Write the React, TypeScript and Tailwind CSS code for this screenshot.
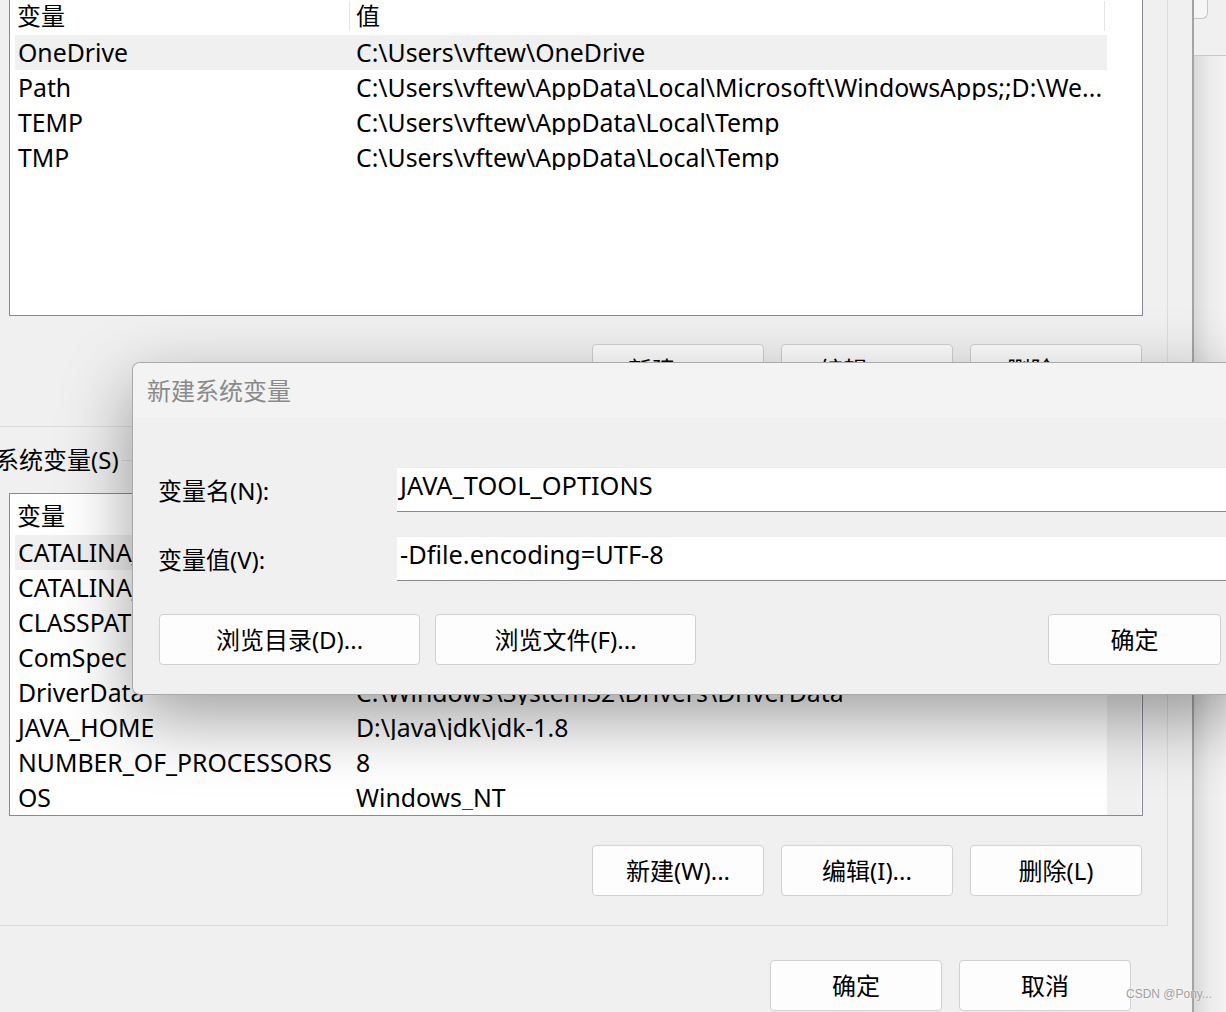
import React from 'react';

type Row = { name: string; value: string };

const userRows: Row[] = [
  { name: 'OneDrive', value: 'C:\\Users\\vftew\\OneDrive' },
  { name: 'Path', value: 'C:\\Users\\vftew\\AppData\\Local\\Microsoft\\WindowsApps;;D:\\We...' },
  { name: 'TEMP', value: 'C:\\Users\\vftew\\AppData\\Local\\Temp' },
  { name: 'TMP', value: 'C:\\Users\\vftew\\AppData\\Local\\Temp' },
];

const systemRows: Row[] = [
  { name: 'CATALINA_BASE', value: 'D:\\Tomcat\\apache-tomcat-9.0' },
  { name: 'CATALINA_HOME', value: 'D:\\Tomcat\\apache-tomcat-9.0' },
  { name: 'CLASSPATH', value: '.;%JAVA_HOME%\\lib' },
  { name: 'ComSpec', value: 'C:\\Windows\\system32\\cmd.exe' },
  { name: 'DriverData', value: 'C:\\Windows\\System32\\Drivers\\DriverData' },
  { name: 'JAVA_HOME', value: 'D:\\Java\\jdk\\jdk-1.8' },
  { name: 'NUMBER_OF_PROCESSORS', value: '8' },
  { name: 'OS', value: 'Windows_NT' },
];

function Btn({ label, className = 'w-[172px]' }: { label: string; className?: string }) {
  return (
    <div
      className={`flex h-[51px] items-center justify-center rounded-[4px] border border-[#d0d0d0] bg-[#fdfdfd] text-[24px] text-black ${className}`}
    >
      {label}
    </div>
  );
}

function ListView({ rows, scroll, className = '' }: { rows: Row[]; scroll?: boolean; className?: string }) {
  return (
    <div className={`ml-[9px] flex h-[323px] w-[1134px] flex-col border border-[#868a94] bg-white ${className}`}>
      <div className="flex h-[41px] shrink-0 pt-[3px] text-[24px]">
        <div className="flex w-[339px] items-center pl-[7px]">变量</div>
        <div className="my-[4px] w-px bg-[#e5e5e5]" />
        <div className="flex w-[754px] items-center pl-[6px]">值</div>
        <div className="my-[4px] w-px bg-[#e5e5e5]" />
      </div>
      <div className="flex flex-1">
        <div className="ml-[5px] flex w-[1092px] flex-col">
          {rows.map((r, i) => (
            <div key={r.name} className={`flex h-[35px] items-center text-[24.8px] ${i === 0 ? 'bg-[#f0f0f0]' : ''}`}>
              <div className="w-[338px] shrink-0 whitespace-nowrap pl-[3px]">{r.name}</div>
              <div className="flex-1 overflow-hidden whitespace-nowrap pl-[3px]">{r.value}</div>
            </div>
          ))}
        </div>
        {scroll && <div className="w-[34px] bg-[#f0f0f0]" />}
      </div>
    </div>
  );
}

export default function App() {
  return (
    <div className="relative flex h-[1012px] w-[1226px] overflow-hidden bg-[#f0f0f0] font-['Noto_Sans','Noto_Sans_CJK_SC',sans-serif] leading-none text-black">
      {/* main window */}
      <div className="flex w-[1192px] shrink-0 flex-col">
        <div className="flex h-[427px] w-[1168px] flex-col border-r border-b border-[#dcdcdc]">
          <ListView rows={userRows} className="-mt-[7px]" />
          <div className="mt-[28px] flex justify-end gap-[17px] pr-[25px]">
            <Btn label="新建(N)..." />
            <Btn label="编辑(E)..." />
            <Btn label="删除(D)..." />
          </div>
        </div>

        <div className="flex w-[1168px] flex-col border-r border-b border-[#dcdcdc] pb-[29px]">
          <div className="flex h-[66px] items-center">
            <span className="-ml-[5px] whitespace-nowrap text-[24px]">系统变量(S)</span>
            <div className="ml-[3px] h-px flex-1 bg-[#dcdcdc]" />
          </div>
          <ListView rows={systemRows} scroll />
          <div className="mt-[29px] flex justify-end gap-[17px] pr-[25px]">
            <Btn label="新建(W)..." />
            <Btn label="编辑(I)..." />
            <Btn label="删除(L)" />
          </div>
        </div>

        <div className="mt-[34px] flex justify-end gap-[17px] pr-[61px]">
          <Btn label="确定" />
          <Btn label="取消" />
        </div>
      </div>

      {/* window edge and the window behind */}
      <div className="w-[2px] shrink-0 bg-[#a4a4a4]" />
      <div className="flex flex-1 flex-col">
        <div className="h-[56px] border-b border-[#c9c9c9] bg-[#f0f0f0]">
          <div className="h-[19px] w-[14px] rounded-br-[6px] border-r border-b border-[#c4c4c4] bg-[#f6f6f6]" />
        </div>
        <div className="flex-1 bg-gradient-to-r from-[#d9d9d9] via-[#ececec] to-[#f3f3f3]" />
      </div>

      {/* 新建系统变量 dialog */}
      <div className="absolute left-[132px] top-[362px] flex h-[333px] w-[1110px] flex-col overflow-hidden rounded-l-[8px] border border-r-0 border-[#a9a9a9] bg-[#f0f0f0] shadow-[0_24px_70px_rgba(0,0,0,0.38)]">
        <div className="flex h-[55px] shrink-0 items-center bg-[#f3f3f3] pl-[14px] text-[24px] text-[#8a8a8a]">新建系统变量</div>
        <div className="flex flex-col pl-[25px] pt-[49px]">
          <div className="flex h-[45px] items-center">
            <div className="w-[239px] pt-[2px] text-[24px]">变量名(N):</div>
            <div className="flex h-[45px] flex-1 items-center border-t border-b border-t-[#ececec] border-b-[#8a8a8a] bg-white pb-[8px] pl-[3px] text-[25.4px]">
              JAVA_TOOL_OPTIONS
            </div>
          </div>
          <div className="mt-[24px] flex h-[45px] items-center">
            <div className="w-[239px] pt-[2px] text-[24px]">变量值(V):</div>
            <div className="flex h-[45px] flex-1 items-center border-t border-b border-t-[#ececec] border-b-[#8a8a8a] bg-white pb-[8px] pl-[3px] text-[25.4px]">
              -Dfile.encoding=UTF-8
            </div>
          </div>
          <div className="mt-[33px] flex">
            <Btn label="浏览目录(D)..." className="ml-[1px] w-[261px]" />
            <Btn label="浏览文件(F)..." className="ml-[15px] w-[261px]" />
            <Btn label="确定" className="ml-[352px] w-[173px]" />
          </div>
        </div>
      </div>

      <div className="absolute left-[1126px] top-[988px] whitespace-nowrap font-['Liberation_Sans',sans-serif] text-[12px] text-[#a0a0a0] [text-shadow:0_0_2px_#fff]">
        CSDN @Pony...
      </div>
    </div>
  );
}
